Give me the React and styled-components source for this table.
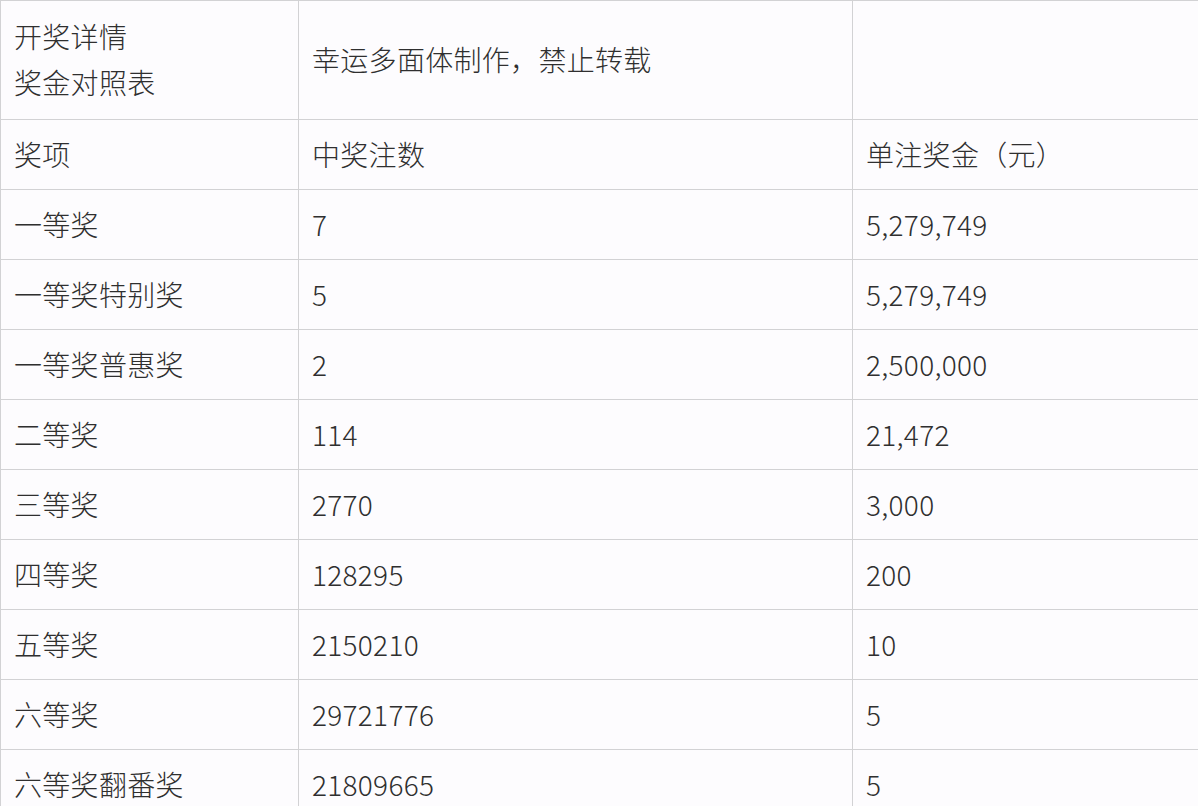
import * as React from "react";
import styled, { createGlobalStyle } from "styled-components";

const GlobalStyle = createGlobalStyle`
  html, body {
    margin: 0;
    padding: 0;
    background: #fdfcfe;
  }
  body {
    font-family: "Noto Sans CJK SC", "Noto Sans", sans-serif;
    color: #333;
  }
`;

const Page = styled.div`
  width: 1198px;
  height: 806px;
  overflow: hidden;
  background: #fdfcfe;
`;

const Table = styled.table`
  width: 1198px;
  border-collapse: collapse;
  table-layout: fixed;
  font-size: 28px;
`;

const Cell = styled.td`
  border: 1px solid #d2d2d4;
  padding: 0 13px 2px;
  height: ${(p) => (p.$tall ? "116px" : "67px")};
  line-height: 46px;
  vertical-align: middle;
  white-space: nowrap;
  color: #2f2f2f;
  font-weight: 300;
  letter-spacing: 0.3px;
`;

const rows = [
  ["奖项", "中奖注数", "单注奖金（元）"],
  ["一等奖", "7", "5,279,749"],
  ["一等奖特别奖", "5", "5,279,749"],
  ["一等奖普惠奖", "2", "2,500,000"],
  ["二等奖", "114", "21,472"],
  ["三等奖", "2770", "3,000"],
  ["四等奖", "128295", "200"],
  ["五等奖", "2150210", "10"],
  ["六等奖", "29721776", "5"],
  ["六等奖翻番奖", "21809665", "5"],
];

export default function App() {
  return (
    <Page>
      <GlobalStyle />
      <Table>
        <colgroup>
          <col style={{ width: 298 }} />
          <col style={{ width: 554 }} />
          <col style={{ width: 346 }} />
        </colgroup>
        <tbody>
          <tr>
            <Cell $tall>
              开奖详情
              <br />
              奖金对照表
            </Cell>
            <Cell $tall>幸运多面体制作，禁止转载</Cell>
            <Cell $tall></Cell>
          </tr>
          {rows.map((r, i) => (
            <tr key={i}>
              {r.map((c, j) => (
                <Cell key={j}>{c}</Cell>
              ))}
            </tr>
          ))}
        </tbody>
      </Table>
    </Page>
  );
}
